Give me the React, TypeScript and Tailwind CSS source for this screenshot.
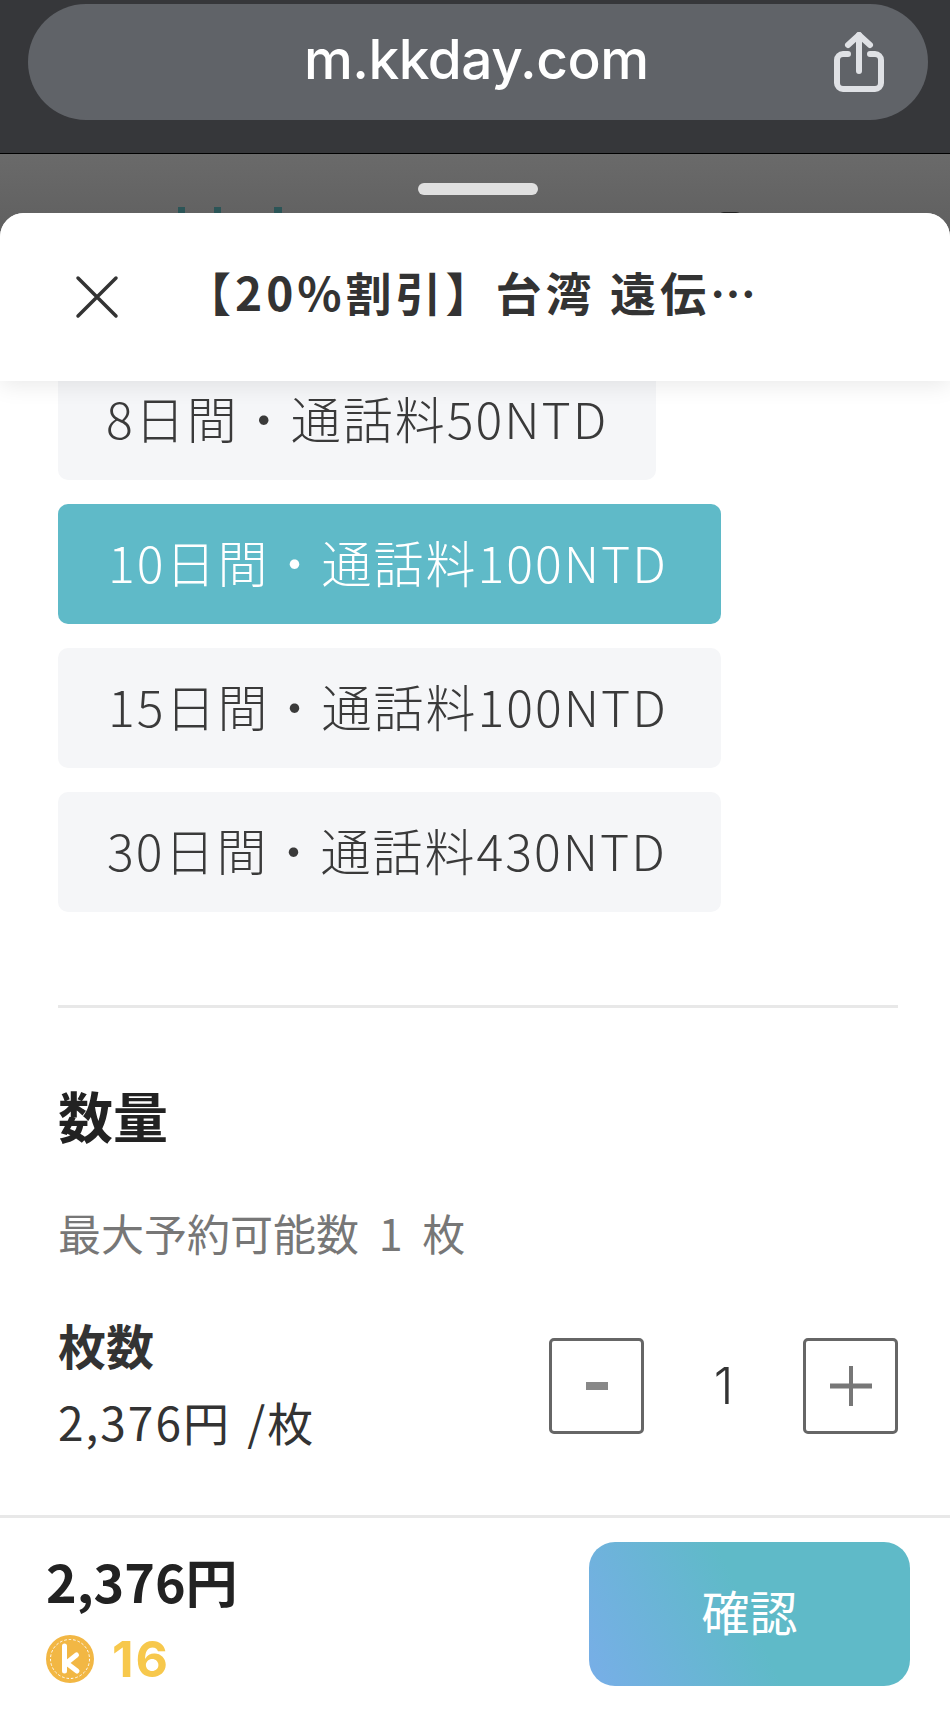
import React from "react";

const plans = [
  { label: "8日間・通話料50NTD", width: "w-[598px]", pad: "pl-[48px]" },
  { label: "10日間・通話料100NTD", width: "w-[663px]", pad: "pl-[50px]", active: true },
  { label: "15日間・通話料100NTD", width: "w-[663px]", pad: "pl-[50px]" },
  { label: "30日間・通話料430NTD", width: "w-[663px]", pad: "pl-[49px]" },
];

const ShareIcon = () => (
  <svg width="50" height="60" viewBox="0 0 50 60" fill="none" stroke="#dfe1e5" strokeWidth="6" strokeLinecap="round" strokeLinejoin="round">
    <path d="M14 22H9a6 6 0 0 0-6 6v23a6 6 0 0 0 6 6h32a6 6 0 0 0 6-6V28a6 6 0 0 0-6-6h-5" />
    <path d="M25 39V3" />
    <path d="M14 13L25 3l11 10" />
  </svg>
);

const CoinIcon = () => (
  <svg width="48" height="48" viewBox="0 0 48 48">
    <circle cx="24" cy="24" r="24" fill="#f2b744" />
    <circle cx="24" cy="24" r="19.5" fill="none" stroke="#fff" strokeWidth="1" strokeDasharray="2.5 2" />
    <path d="M18.5 11v25M30.5 20l-10 8 10.5 8" fill="none" stroke="#fff" strokeWidth="5" strokeLinecap="round" strokeLinejoin="round" />
  </svg>
);

export default function App() {
  return (
    <div className="flex h-[1710px] w-full flex-col overflow-hidden bg-white font-['Noto_Sans_CJK_JP',sans-serif] text-[#333]">
      {/* browser bar */}
      <div className="h-[154px] shrink-0 border-b border-black bg-[#36373a] pt-[4px] pr-[22px] pl-[28px]">
        <div className="flex h-[116px] items-center justify-between rounded-full bg-[#606368] pr-[44px] pl-[276px]">
          <span className="pb-[6px] font-['Inter',sans-serif] text-[55px] leading-none font-medium tracking-[-0.5px] text-white">m.kkday.com</span>
          <ShareIcon />
        </div>
      </div>

      {/* page behind the sheet */}
      <div className="flex h-[83px] shrink-0 flex-col bg-gradient-to-b from-[#6a6a6a] to-[#5f5f5f]">
        <div className="mt-[29px] ml-[6px] h-[12px] w-[120px] self-center rounded-full bg-[#e0e0e0]" />
        <div className="mt-[12px] flex h-[10px] pl-[178px]">
          <div className="h-full w-[7px] bg-[#2c5557]" />
          <div className="ml-[29px] h-full w-[7px] bg-[#2c5557]" />
          <div className="ml-[53px] h-full w-[8px] bg-[#2c5557]" />
          <div className="mt-[5px] ml-[436px] h-[6px] w-[24px] rounded-t-full bg-[#222]" />
        </div>
      </div>

      {/* sheet */}
      <div className="-mt-[24px] flex min-h-0 flex-1 flex-col overflow-hidden rounded-t-[24px] bg-white">
        <div className="relative z-10 flex h-[168px] shrink-0 items-start bg-white pt-[46px] pl-[75px] shadow-[0_4px_22px_rgba(0,0,0,0.09)]">
          <svg className="mt-[16px]" width="44" height="44" viewBox="0 0 44 44" fill="none" stroke="#333" strokeWidth="3.5" strokeLinecap="round">
            <path d="M3 3l38 38M41 3L3 41" />
          </svg>
          <h1 className="ml-[66px] whitespace-nowrap text-[46px] leading-[64px] font-bold tracking-[4px]">【20%割引】台湾 遠伝…</h1>
        </div>

        <div className="min-h-0 flex-1 overflow-hidden pr-[52px] pl-[58px]">
          <div className="-mt-[21px] flex flex-col gap-[24px]">
            {plans.map((plan) => (
              <div
                key={plan.label}
                className={`flex h-[120px] items-center rounded-[10px] pb-[6px] text-[50px] font-light tracking-[2px] ${plan.width} ${plan.pad} ${
                  plan.active ? "bg-[#5fbac8] text-white" : "bg-[#f5f6f8] text-[#3a3a3a]"
                }`}
              >
                {plan.label}
              </div>
            ))}
          </div>

          <div className="mt-[93px] h-[3px] bg-[#e8e8e8]" />

          <h2 className="mt-[71px] text-[55px] leading-[70px] font-bold text-[#222]">数量</h2>
          <p className="mt-[53px] text-[43px] leading-[60px] text-[#777] [word-spacing:10px]">最大予約可能数 1 枚</p>

          <div className="mt-[50px] flex items-start justify-between">
            <div>
              <div className="text-[48px] leading-[64px] font-bold">枚数</div>
              <div className="mt-[13px] text-[46px] leading-[64px] tracking-[2px] [word-spacing:4px]">2,376円 /枚</div>
            </div>
            <div className="mt-[26px] flex items-center">
              <div className="flex h-[96px] w-[95px] items-center justify-center rounded-[5px] border-[3px] border-[#666]">
                <div className="h-[8px] w-[22px] bg-[#888]" />
              </div>
              <span className="w-[159px] text-center font-['Inter',sans-serif] text-[50px] font-light">1</span>
              <div className="flex h-[96px] w-[95px] items-center justify-center rounded-[5px] border-[3px] border-[#666]">
                <svg width="42" height="40" viewBox="0 0 42 40" fill="#777">
                  <path d="M0 17.500h42v5H0zM19 0h4v40h-4z" />
                </svg>
              </div>
            </div>
          </div>
        </div>

        {/* footer */}
        <div className="flex h-[195px] shrink-0 items-start justify-between border-t-[3px] border-[#e8e8e8] pt-[24px] pr-[40px] pl-[46px]">
          <div>
            <div className="mt-[7px] text-[52px] leading-[64px] font-bold text-[#222]">2,376円</div>
            <div className="mt-[22px] flex items-center gap-[18px]">
              <CoinIcon />
              <span className="font-['Inter',sans-serif] text-[50px] leading-[48px] font-bold tracking-[2px] text-[#f7c84c]">16</span>
            </div>
          </div>
          <div className="flex h-[144px] w-[321px] items-center justify-center rounded-[26px] bg-[linear-gradient(65deg,#78aee8_0%,#5fbac8_50%)] pb-[8px] text-[48px] text-white">
            確認
          </div>
        </div>
      </div>
    </div>
  );
}
